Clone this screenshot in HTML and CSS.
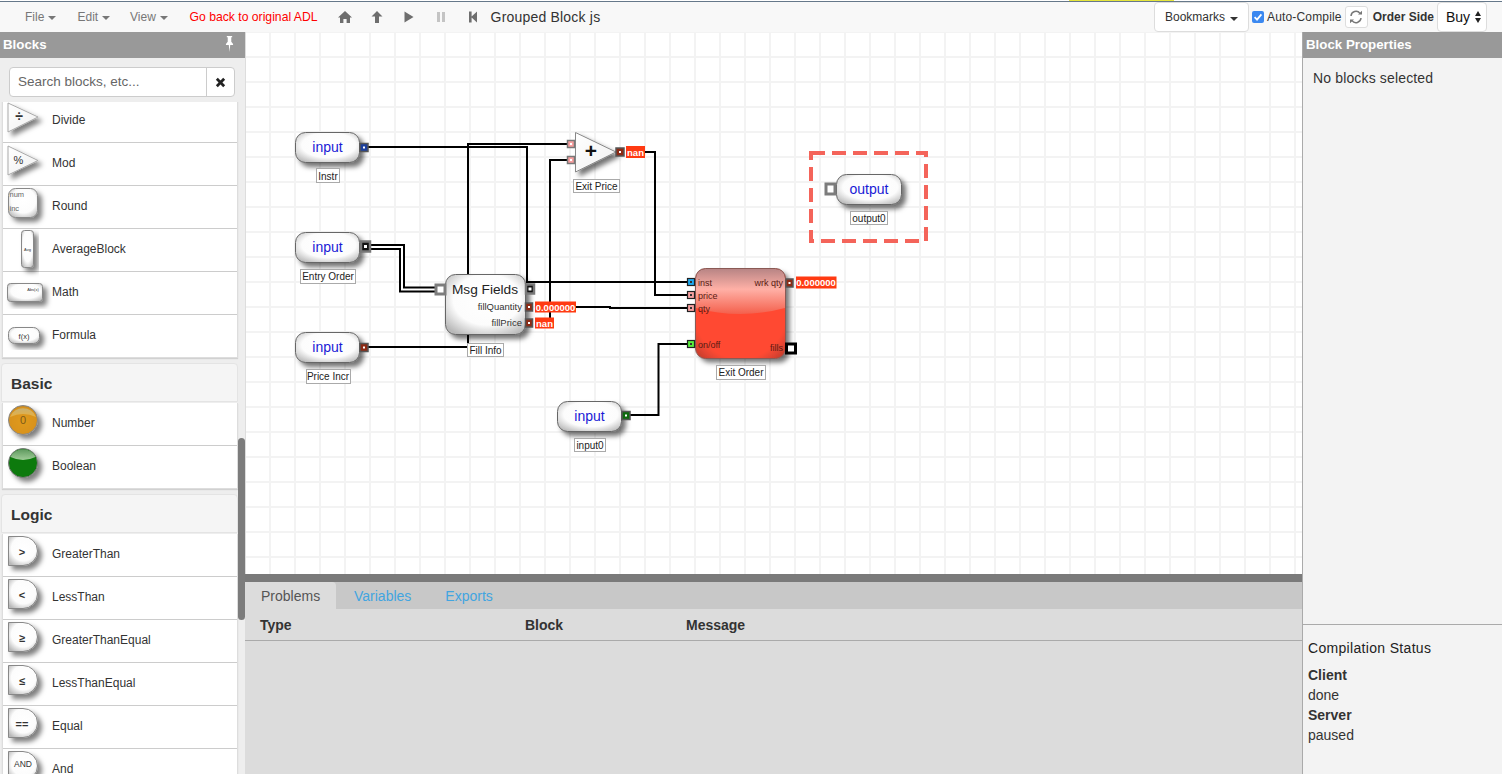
FILE: index.html
```html
<!DOCTYPE html>
<html lang="en">
<head>
<meta charset="utf-8">
<title>Grouped Block js</title>
<link rel="stylesheet" href="styles.css">
</head>
<body>
<svg class="defs" width="0" height="0" aria-hidden="true">
  <defs>
    <filter id="sh" x="-30%" y="-30%" width="170%" height="170%">
      <feDropShadow dx="4" dy="4" stdDeviation="2.6" flood-color="#000" flood-opacity=".55"/>
    </filter>
    <filter id="shs" x="-30%" y="-30%" width="170%" height="170%">
      <feDropShadow dx="4" dy="4" stdDeviation="2.4" flood-color="#000" flood-opacity=".5"/>
    </filter>
    <radialGradient id="blk" cx="52%" cy="42%" r="68%">
      <stop offset="0" stop-color="#fff"/>
      <stop offset=".62" stop-color="#fcfcfc"/>
      <stop offset="1" stop-color="#b8b8b8"/>
    </radialGradient>
    <linearGradient id="tri" x1="0" y1="0" x2="1" y2="1">
      <stop offset="0" stop-color="#fff"/>
      <stop offset=".7" stop-color="#f4f4f4"/>
      <stop offset="1" stop-color="#bbb"/>
    </linearGradient>
    <radialGradient id="red" cx="50%" cy="50%" r="72%">
      <stop offset="0" stop-color="#ff4a33"/>
      <stop offset=".7" stop-color="#ff4a33"/>
      <stop offset="1" stop-color="#b33a2c"/>
    </radialGradient>
    <linearGradient id="gloss" x1="0" y1="0" x2="0" y2="1">
      <stop offset="0" stop-color="#b88585"/>
      <stop offset=".45" stop-color="#ffb0a6"/>
      <stop offset="1" stop-color="#f4604c"/>
    </linearGradient>
    <radialGradient id="amber" cx="50%" cy="55%" r="60%">
      <stop offset="0" stop-color="#e09a1c"/>
      <stop offset=".8" stop-color="#d8921c"/>
      <stop offset="1" stop-color="#a87a30"/>
    </radialGradient>
    <linearGradient id="amberTop" x1="0" y1="0" x2="0" y2="1">
      <stop offset="0" stop-color="#c8b070"/>
      <stop offset="1" stop-color="#e8b040"/>
    </linearGradient>
    <linearGradient id="greenTop" x1="0" y1="0" x2="0" y2="1">
      <stop offset="0" stop-color="#5f9a5f"/>
      <stop offset="1" stop-color="#a0cc98"/>
    </linearGradient>
  </defs>
</svg>

<div class="strip"><span class="strip-mark"></span></div>

<header class="topbar">
  <nav class="menus">
    <span class="menu">File<i class="caret"></i></span>
    <span class="menu">Edit<i class="caret"></i></span>
    <span class="menu">View<i class="caret"></i></span>
  </nav>
  <a class="goback">Go back to original ADL</a>
  <div class="tools">
    <svg class="tool" viewBox="0 0 14 12"><path d="M7 0 L14 6.4 H12 V12 H8.6 V8 H5.4 V12 H2 V6.4 H0 Z"/></svg>
    <svg class="tool" viewBox="0 0 14 12"><path d="M7 0 L12.5 5.6 H9 V12 H5 V5.6 H1.5 Z"/></svg>
    <svg class="tool" viewBox="0 0 14 12"><path d="M2.5 0.5 L11.5 6 L2.5 11.5 Z"/></svg>
    <svg class="tool dim" viewBox="0 0 14 12"><path d="M3 1 H6 V11 H3 Z M8 1 H11 V11 H8 Z"/></svg>
    <svg class="tool" viewBox="0 0 14 12"><path d="M3 .5 H5.6 V5.4 L11 .5 V11.5 L5.6 6.6 V11.5 H3 Z"/></svg>
  </div>
  <span class="doc-title">Grouped Block js</span>
  <div class="top-right">
    <button class="btn bookmarks">Bookmarks<i class="caret dark"></i></button>
    <label class="auto"><span class="check"><svg viewBox="0 0 12 12"><path d="M2.6 6.2 L5 8.6 L9.4 3.4" fill="none" stroke="#fff" stroke-width="1.8"/></svg></span>Auto-Compile</label>
    <button class="refresh"><svg viewBox="0 0 14 14"><path d="M2 6 A5 5 0 0 1 11 3.4 M12 8 A5 5 0 0 1 3 10.6" fill="none" stroke="#777" stroke-width="1.5"/><path d="M9 4.6 H13 V.8 Z M5 9.4 H1 V13.2 Z" fill="#777"/></svg></button>
    <b class="order">Order Side</b>
    <div class="buy">Buy<span class="spin"><i></i><i></i></span></div>
  </div>
</header>

<div class="main">
  <aside class="sidebar">
    <div class="panel-head">Blocks
      <svg class="pin" viewBox="0 0 10 18"><path d="M2 0 H8 V1.5 H7 V6.5 L9 9 V10 H5.8 L5 18 L4.2 10 H1 V9 L3 6.5 V1.5 H2 Z" fill="#fff"/></svg>
    </div>
    <div class="search">
      <span class="search-input">Search blocks, etc...</span>
      <span class="search-clear"><svg viewBox="0 0 12 12"><path d="M2 2 L10 10 M10 2 L2 10" stroke="#222" stroke-width="3"/></svg></span>
    </div>
    <div class="scroll">
      <div class="group first">
        <div class="row"><svg class="ico" viewBox="0 0 49 42"><path class="i-tri" d="M5 3 L35 17 L5 32 Z"/><text class="i-big" x="16" y="21">÷</text></svg>Divide</div>
        <div class="row"><svg class="ico" viewBox="0 0 49 42"><path class="i-tri" d="M5 3 L35 17.5 L5 32 Z"/><text class="i-mid" x="15.5" y="21">%</text></svg>Mod</div>
        <div class="row"><svg class="ico" viewBox="0 0 49 42"><rect class="i-blk" x="5.5" y="2.5" width="29" height="29" rx="7"/><text class="i-tiny" x="6.500" y="10.500">num</text><text class="i-tiny" x="6.500" y="25">inc</text></svg>Round</div>
        <div class="row"><svg class="ico" viewBox="0 0 49 42"><rect class="i-blk" x="18.500" y="1.500" width="12" height="37" rx="3"/><text class="i-micro" x="24.500" y="21.500">Avg</text></svg>AverageBlock</div>
        <div class="row"><svg class="ico" viewBox="0 0 49 42"><rect class="i-blk" x="4.500" y="11.500" width="35" height="18" rx="3"/><text class="i-micro" x="30" y="18.500">Abs(x)</text></svg>Math</div>
        <div class="row"><svg class="ico" viewBox="0 0 49 42"><rect class="i-blk" x="5.500" y="12.500" width="31" height="16" rx="6"/><text class="i-small" x="21" y="23.500">f(x)</text></svg>Formula</div>
      </div>
      <h3 class="group-head">Basic</h3>
      <div class="group">
        <div class="row"><svg class="ico" viewBox="0 0 49 42"><g class="i-shadow"><circle cx="20" cy="17" r="14.500" fill="url(#amber)" stroke="#888"/></g><path d="M7 14 A14 14 0 0 1 33 14 Q20 8 7 14 Z" fill="url(#amberTop)"/><text class="i-zero" x="20" y="21">0</text></svg>Number</div>
        <div class="row"><svg class="ico" viewBox="0 0 49 42"><g class="i-shadow"><circle cx="20" cy="17" r="14.500" fill="#0f7a0f" stroke="#777"/></g><path d="M7.500 11 A14 14 0 0 1 32.500 11 Q20 17 7.500 11 Z" fill="url(#greenTop)"/></svg>Boolean</div>
      </div>
      <h3 class="group-head">Logic</h3>
      <div class="group">
        <div class="row"><svg class="ico" viewBox="0 0 49 42"><path class="i-d" d="M5.500 2.500 H20 A14.500 14.500 0 0 1 20 31.500 H5.500 Z"/><text class="i-op" x="19" y="21.500">&gt;</text></svg>GreaterThan</div>
        <div class="row"><svg class="ico" viewBox="0 0 49 42"><path class="i-d" d="M5.500 2.500 H20 A14.500 14.500 0 0 1 20 31.500 H5.500 Z"/><text class="i-op" x="19" y="21.500">&lt;</text></svg>LessThan</div>
        <div class="row"><svg class="ico" viewBox="0 0 49 42"><path class="i-d" d="M5.500 2.500 H20 A14.500 14.500 0 0 1 20 31.500 H5.500 Z"/><text class="i-op" x="19" y="21.500">≥</text></svg>GreaterThanEqual</div>
        <div class="row"><svg class="ico" viewBox="0 0 49 42"><path class="i-d" d="M5.500 2.500 H20 A14.500 14.500 0 0 1 20 31.500 H5.500 Z"/><text class="i-op" x="19" y="21.500">≤</text></svg>LessThanEqual</div>
        <div class="row"><svg class="ico" viewBox="0 0 49 42"><path class="i-d" d="M5.500 2.500 H20 A14.500 14.500 0 0 1 20 31.500 H5.500 Z"/><text class="i-op" x="19" y="21.500">==</text></svg>Equal</div>
        <div class="row"><svg class="ico" viewBox="0 0 49 42"><path class="i-d" d="M5.500 2.500 H20 A14.500 14.500 0 0 1 20 31.500 H5.500 Z"/><text class="i-and" x="20" y="18">AND</text></svg>And</div>
      </div>
      <span class="scrollbar"></span>
    </div>
  </aside>

  <section class="center">
    <div class="canvas">
      <svg class="diagram" width="1057" height="542" viewBox="245 32 1057 542">
        <!-- wires -->
        <g class="wire">
          <path d="M368 147 H527 V282 H687"/>
          <path d="M468 275 V144 H567"/>
          <path d="M567 160 H550 V318"/>
          <path d="M368 347 H468 M468 335 V344"/>
          <path d="M645 152 H655 V295 H687"/>
          <path d="M576 307 H610 V308 H687"/>
          <path d="M630 415 H658.500 V344 H687"/>
        </g>
        <path class="wire-bus" d="M370 247 H402 V289.500 H435"/>
        <path class="wire-bus-in" d="M370 247 H402 V289.500 H435"/>

        <!-- dashed selection -->
        <rect class="selection" x="811" y="153" width="115" height="88"/>

        <!-- input: Instr -->
        <rect class="blk" x="295.500" y="132.500" width="64" height="30" rx="10"/>
        <text class="in-text" x="327.500" y="152">input</text>
        <rect class="port" x="360" y="143.500" width="8" height="8" fill="#1c3f9c"/><rect class="dot" x="363" y="146.500" width="2" height="2"/>
        <rect class="lbl-box" x="316.500" y="168.500" width="23" height="14"/><text class="lbl" x="328" y="179.500">Instr</text>

        <!-- input: Entry Order -->
        <rect class="blk" x="295.500" y="232.500" width="64" height="30" rx="10"/>
        <text class="in-text" x="327.500" y="252">input</text>
        <rect class="port-big" x="361" y="241.500" width="9" height="10" fill="#111"/><rect class="dot" x="364" y="245" width="3" height="3"/>
        <rect class="lbl-box" x="300.500" y="269.500" width="55" height="14"/><text class="lbl" x="328" y="280">Entry Order</text>

        <!-- input: Price Incr -->
        <rect class="blk" x="295.500" y="332.500" width="64" height="30" rx="10"/>
        <text class="in-text" x="327.500" y="352">input</text>
        <rect class="port" x="360" y="343.500" width="8" height="8" fill="#8c2a14"/><rect class="dot" x="363" y="346.500" width="2" height="2"/>
        <rect class="lbl-box" x="306.500" y="369.500" width="44" height="14"/><text class="lbl" x="328" y="380">Price Incr</text>

        <!-- Msg Fields -->
        <rect class="blk" x="445.500" y="274.500" width="80" height="60" rx="10"/>
        <text class="title-text" x="485" y="294">Msg Fields</text>
        <text class="out-name" x="522" y="310">fillQuantity</text>
        <text class="out-name" x="522" y="326">fillPrice</text>
        <rect class="port-gray" x="436" y="285" width="9" height="9" fill="#fff"/>
        <rect class="port-big" x="526" y="284.500" width="8" height="9" fill="#111"/><rect class="dot" x="528.500" y="287.500" width="3" height="3"/>
        <rect class="port" x="525.500" y="303" width="7" height="8" fill="#8c2a14"/><rect class="dot" x="528" y="306" width="2" height="2"/>
        <rect class="port" x="525.500" y="319" width="7" height="8" fill="#8c2a14"/><rect class="dot" x="528" y="322" width="2" height="2"/>
        <rect class="val-box" x="535" y="301.500" width="41" height="11"/><text class="val" x="555.500" y="310.500">0.000000</text>
        <rect class="val-box" x="535" y="317.500" width="19" height="11"/><text class="val" x="544.500" y="326.500">nan</text>
        <rect class="lbl-box" x="467.500" y="343.500" width="36" height="13"/><text class="lbl" x="485.500" y="353.500">Fill Info</text>

        <!-- Adder -->
        <path class="tri" d="M575.500 132.500 L616 152 L575.500 172 Z"/>
        <text class="plus" x="591" y="157.500">+</text>
        <rect class="port-pink" x="567.500" y="140.500" width="7" height="7"/><rect class="dot" x="570" y="143" width="2" height="2"/>
        <rect class="port-pink" x="567.500" y="156.500" width="7" height="7"/><rect class="dot" x="570" y="159" width="2" height="2"/>
        <rect class="port" x="616" y="148" width="8" height="8" fill="#8c2a14"/><rect class="dot" x="619" y="151" width="2" height="2"/>
        <rect class="val-box" x="626" y="146" width="19" height="12"/><text class="val" x="635.500" y="155.500">nan</text>
        <rect class="lbl-box" x="573.500" y="179.500" width="46" height="13"/><text class="lbl" x="596.500" y="190">Exit Price</text>

        <!-- Exit Order -->
        <rect class="exit" x="695.500" y="268.500" width="90" height="90" rx="10"/>
        <path class="gloss" d="M696 308 V278 Q696 269 705 269 H775 Q785 269 785 278 V308 Q740 320 696 308 Z"/>
        <rect class="exit-edge" x="695.500" y="268.500" width="90" height="90" rx="10"/>
        <text class="exit-in" x="698" y="286">inst</text>
        <text class="exit-in" x="698" y="299">price</text>
        <text class="exit-in" x="698" y="312">qty</text>
        <text class="exit-in" x="698" y="347.500">on/off</text>
        <text class="exit-out" x="783" y="286">wrk qty</text>
        <text class="exit-out" x="783" y="351">fills</text>
        <rect class="port-dark" x="687.500" y="278.500" width="7" height="7" fill="#1ea9f0"/><rect class="dot-d" x="690" y="281" width="2" height="2"/>
        <rect class="port-dark" x="687.500" y="291.500" width="7" height="7" fill="#f8a0a0"/><rect class="dot-d" x="690" y="294" width="2" height="2"/>
        <rect class="port-dark" x="687.500" y="304.500" width="7" height="7" fill="#f8a0a0"/><rect class="dot-d" x="690" y="307" width="2" height="2"/>
        <rect class="port-dark" x="687.500" y="340.500" width="7" height="7" fill="#58ee3c"/><rect class="dot-d" x="690" y="343" width="2" height="2"/>
        <rect class="port" x="786" y="279" width="7" height="8" fill="#8c2a14"/><rect class="dot" x="788.500" y="282" width="2" height="2"/>
        <rect class="val-box" x="796" y="276.500" width="40.500" height="12"/><text class="val" x="816" y="286">0.000000</text>
        <rect class="port-fills" x="786.500" y="344" width="9" height="9"/>
        <rect class="lbl-box" x="716.500" y="365.500" width="49" height="14"/><text class="lbl" x="741" y="376">Exit Order</text>

        <!-- input0 -->
        <rect class="blk" x="557.500" y="401.500" width="64" height="30" rx="10"/>
        <text class="in-text" x="589.500" y="421">input</text>
        <rect class="port" x="622" y="411.500" width="8" height="8" fill="#0e6a0e"/><rect class="dot" x="625" y="414.500" width="2" height="2"/>
        <rect class="lbl-box" x="574.500" y="438.500" width="31" height="13"/><text class="lbl" x="590" y="449">input0</text>

        <!-- output -->
        <rect class="blk" x="836.500" y="174.500" width="65" height="30" rx="10"/>
        <text class="in-text" x="869" y="194">output</text>
        <rect class="port-gray" x="826" y="184" width="9" height="10" fill="#fff"/>
        <rect class="lbl-box" x="850.500" y="211.500" width="37" height="13"/><text class="lbl" x="869" y="222">output0</text>
      </svg>
    </div>
    <div class="splitter"></div>
    <div class="bottom">
      <div class="tabs">
        <span class="tab active">Problems</span>
        <span class="tab">Variables</span>
        <span class="tab">Exports</span>
      </div>
      <div class="table-head">
        <span>Type</span>
        <span>Block</span>
        <span>Message</span>
      </div>
    </div>
  </section>

  <aside class="props">
    <div class="panel-head">Block Properties</div>
    <p class="none">No blocks selected</p>
    <div class="status">
      <h4>Compilation Status</h4>
      <b>Client</b>
      <span>done</span>
      <b>Server</b>
      <span>paused</span>
    </div>
  </aside>
</div>
</body>
</html>
```
FILE: styles.css
```css
* { box-sizing: border-box; }
html, body { margin: 0; height: 100%; overflow: hidden; }
body {
  width: 1502px;
  height: 774px;
  display: flex;
  flex-direction: column;
  background: #fff;
  color: #333;
  font-family: "Liberation Sans", Arial, sans-serif;
  font-size: 14px;
}
.defs { position: absolute; }

.strip { height: 1px; flex: none; background: #fff; }
.strip-mark { display: block; width: 105px; height: 1px; margin-left: 1069px; background: #e6e63c; }

/* top bar */
.topbar {
  height: 31px;
  flex: none;
  display: flex;
  align-items: center;
  background: #f8f8f8;
  border-top: 1px solid #66788a;
}
.menus { display: flex; padding-left: 25px; }
.menu { display: flex; align-items: center; font-size: 12px; color: #777; width: 52.5px; }
.caret {
  display: inline-block;
  width: 0;
  height: 0;
  margin-left: 4px;
  margin-top: 1px;
  border-top: 4px solid #777;
  border-left: 4px solid transparent;
  border-right: 4px solid transparent;
}
.caret.dark { border-top-color: #333; margin-left: 5px; }
.goback { margin-left: 7px; font-size: 12.2px; color: #f00; white-space: nowrap; }
.tools { display: flex; align-items: center; margin-left: 20px; gap: 18px; }
.tool { width: 14px; height: 12px; fill: #6e6e6e; display: block; }
.tool.dim { fill: #c4c4c4; }
.doc-title { margin-left: 11px; font-size: 14px; letter-spacing: .2px; color: #333; white-space: nowrap; }
.top-right { margin-left: auto; display: flex; align-items: center; padding-right: 15px; }
.btn {
  width: 95px;
  height: 30px;
  margin-top: -1px;
  font: 12px "Liberation Sans", Arial, sans-serif;
  color: #333;
  background: #fff;
  border: 1px solid #ddd;
  border-radius: 4px;
  padding: 0;
}
.auto { display: flex; align-items: center; margin-left: 3px; font-size: 12px; letter-spacing: .16px; color: #333; white-space: nowrap; }
.check {
  width: 12px;
  height: 12px;
  margin-right: 3px;
  border-radius: 2px;
  background: #3b88f0;
  display: block;
}
.check svg { display: block; width: 12px; height: 12px; }
.refresh {
  width: 23px;
  height: 22px;
  margin-left: 3px;
  padding: 0;
  background: #fff;
  border: 1px solid #ddd;
  border-radius: 3px;
  display: flex;
  align-items: center;
  justify-content: center;
}
.refresh svg { width: 14px; height: 14px; }
.order { margin-left: 5px; font-size: 12px; color: #333; white-space: nowrap; }
.buy {
  width: 50px;
  height: 30px;
  margin-left: 3px;
  margin-top: -1px;
  padding-left: 8px;
  display: flex;
  align-items: center;
  font-size: 14px;
  color: #111;
  background: #fff;
  border: 1px solid #ddd;
  border-radius: 4px;
}
.spin { display: flex; flex-direction: column; gap: 2px; margin-left: 5px; }
.spin i { width: 0; height: 0; border-left: 3.5px solid transparent; border-right: 3.5px solid transparent; }
.spin i:first-child { border-bottom: 5px solid #222; }
.spin i:last-child { border-top: 5px solid #222; }

/* layout */
.main { flex: 1; display: flex; min-height: 0; }
.panel-head {
  height: 26px;
  flex: none;
  display: flex;
  align-items: center;
  justify-content: space-between;
  padding: 0 11px 2px 3px;
  background: #999;
  color: #fff;
  font-size: 13.3px;
  font-weight: 700;
}
.pin { width: 9px; height: 16px; }

/* sidebar */
.sidebar { width: 245px; flex: none; display: flex; flex-direction: column; background: #eee; }
.search { flex: none; display: flex; height: 30px; margin: 9px 10px 5px 9px; background: #fff; border: 1px solid #ccc; border-radius: 4px; }
.search-input { flex: 1; padding-left: 8px; line-height: 27px; font-size: 13.5px; color: #666; }
.search-clear { width: 28px; display: flex; align-items: center; justify-content: center; border-left: 1px solid #ccc; }
.search-clear svg { width: 11px; height: 11px; }
.scroll { position: relative; flex: 1; min-height: 0; overflow: hidden; }
.group { width: 236px; margin-left: 2px; background: #fff; border: 1px solid #ddd; border-top: 0; box-shadow: 0 1px 1px rgba(0,0,0,.12); }
.group.first { margin-top: -2px; border-top: 0; }
.row {
  height: 43px;
  display: flex;
  align-items: center;
  padding-bottom: 3px;
  font-size: 12px;
  color: #333;
  border-bottom: 1px solid #ccc;
  white-space: nowrap;
}
.row:last-child { border-bottom: 0; height: 42px; }
.ico { width: 49px; height: 42px; flex: none; align-self: flex-start; overflow: visible; }
.group-head {
  width: 237px;
  height: 39px;
  margin: 5px 0 1px 1px;
  padding: 0 9px;
  font-size: 15.5px;
  font-weight: 700;
  line-height: 39px;
  color: #333;
  background: #f5f5f5;
  border: 1px solid #e4e4e4;
  border-radius: 4px 4px 0 0;
}
.scrollbar { position: absolute; left: 238px; top: 336px; width: 7px; height: 182px; border-radius: 4px; background: #7c7c7c; }

/* sidebar icon shapes */
.i-tri { fill: url(#tri); stroke: #aaa; filter: url(#shs); }
.i-blk, .i-d { fill: url(#blk); stroke: #888; filter: url(#shs); }
.i-shadow { filter: url(#shs); }
.ico text { font-family: "Liberation Sans", Arial, sans-serif; text-anchor: middle; fill: #333; }
.i-big { font-size: 14px; font-weight: 700; }
.i-mid { font-size: 11px; }
.ico .i-tiny { font-size: 7.5px; text-anchor: start; fill: #666; }
.i-micro { font-size: 4px; }
.i-small { font-size: 7.5px; }
.ico .i-zero { font-size: 11px; fill: #7d5a18; }
.i-op { font-size: 11px; font-weight: 700; }
.i-and { font-size: 8.5px; }

/* center */
.center { flex: 1; min-width: 0; display: flex; flex-direction: column; }
.canvas {
  height: 542px;
  flex: none;
  overflow: hidden;
  background-color: #fff;
  background-image:
    linear-gradient(to right, transparent 23px, #f3f3f3 23px, #f3f3f3 25px),
    linear-gradient(to bottom, transparent 23px, #f3f3f3 23px, #f3f3f3 25px);
  background-size: 25px 25px;
  background-position: 0 1px;
  border-left: 1px solid #ddd;
}
.diagram { display: block; margin-left: -1px; }
.wire path { fill: none; stroke: #000; stroke-width: 2; }
.wire-bus { fill: none; stroke: #000; stroke-width: 6; }
.wire-bus-in { fill: none; stroke: #fff; stroke-width: 2; }
.selection { fill: none; stroke: #f4645a; stroke-width: 4; stroke-dasharray: 14 7; }
.blk { fill: url(#blk); stroke: #666; filter: url(#sh); }
.tri { fill: url(#tri); stroke: #888; filter: url(#sh); }
.exit { fill: url(#red); filter: url(#sh); }
.exit-edge { fill: none; stroke: #8a5a55; }
.gloss { fill: url(#gloss); }
.diagram text { font-family: "Liberation Sans", Arial, sans-serif; }
.in-text { font-size: 14px; fill: #1a1ad6; text-anchor: middle; }
.title-text { font-size: 13.7px; fill: #222; text-anchor: middle; }
.out-name { font-size: 9.5px; fill: #333; text-anchor: end; }
.lbl { font-size: 10px; fill: #222; text-anchor: middle; }
.lbl-box { fill: #fff; stroke: #aaa; }
.val-box { fill: #ff3a12; }
.val { font-size: 9.5px; font-weight: 700; fill: #fff; text-anchor: middle; }
.plus { font-size: 21px; font-weight: 700; fill: #111; text-anchor: middle; }
.port { stroke: #555; stroke-width: 1.5; }
.port-big { stroke: #777; stroke-width: 2.5; }
.port-gray { stroke: #7c7c7c; stroke-width: 3; }
.port-pink { fill: #f8a0a0; stroke: #777; stroke-width: 1.5; }
.port-dark { stroke: #222; stroke-width: 1.2; }
.port-fills { fill: #fff; stroke: #000; stroke-width: 3; }
.dot { fill: #fff; }
.dot-d { fill: #333; }
.exit-in { font-size: 9px; fill: #5a1a12; }
.exit-out { font-size: 9px; fill: #5a1a12; text-anchor: end; }

.splitter { height: 8px; flex: none; background: #7a7a7a; }
.bottom { flex: 1; min-height: 0; background: #dcdcdc; }
.tabs { height: 27px; display: flex; background: #c8c8c8; }
.tab { padding: 6px 16px 0; margin-right: 2px; font-size: 14px; color: #42a5e0; }
.tab.active { width: 91px; margin-right: 2px; color: #555; background: #dcdcdc; border-radius: 0 4px 0 0; }
.table-head {
  height: 32px;
  display: grid;
  grid-template-columns: 265px 161px 1fr;
  align-items: center;
  padding: 1px 0 0 15px;
  font-size: 14px;
  font-weight: 700;
  color: #333;
  border-bottom: 1px solid #aaa;
}

/* right panel */
.props { width: 200px; flex: none; display: flex; flex-direction: column; background: #f3f3f3; border-left: 1px solid #aaa; }
.props .panel-head { padding-left: 3px; }
.none { margin: 12px 0 0 10px; line-height: 16px; font-size: 14px; letter-spacing: .15px; color: #333; }
.status {
  margin-top: auto;
  height: 150px;
  padding: 13px 0 0 5px;
  border-top: 1px solid #aaa;
  display: flex;
  flex-direction: column;
  font-size: 14px;
  line-height: 20px;
}
.status h4 { margin: 0 0 7px; font-size: 14px; font-weight: 400; letter-spacing: .32px; color: #222; }
```
